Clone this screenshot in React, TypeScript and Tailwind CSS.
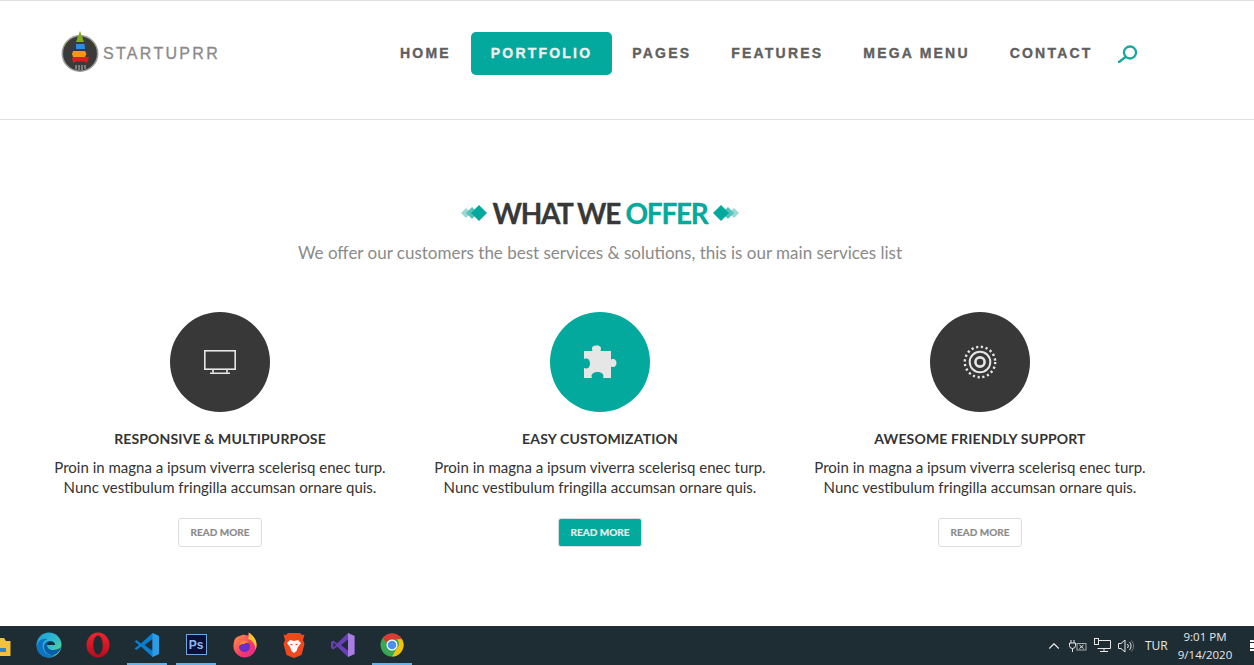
import { ChevronUp } from "lucide-react";

const services = [
    { title: "RESPONSIVE & MULTIPURPOSE", active: false, icon: <MonitorIcon /> },
    { title: "EASY CUSTOMIZATION", active: true, icon: <PuzzleIcon /> },
    { title: "AWESOME FRIENDLY SUPPORT", active: false, icon: <TargetIcon /> },
];

function MonitorIcon() {
    return (
        <svg width="34" height="26" viewBox="0 0 34 26" fill="none" stroke="#e6e6e6" strokeWidth="1.6">
            <rect x="1.8" y="1.8" width="30.4" height="18.4" />
            <path d="M10 20.5v3M24 20.5v3M7 24.2h20" />
        </svg>
    );
}

function PuzzleIcon() {
    return (
        <svg width="34" height="34" viewBox="0 0 34 34" fill="#e6e6e6">
            <path d="M1 6h8.5C8 2 10 0.5 13.5 0.5S19 2 17.500 6H28v8.500c3.500-1.500 5.500 0.500 5.500 3.500s-2 5-5.500 3.500V33h-8c1.500-3.500-1-6-5.500-6s-7 2.500-5.500 6H1V23c3.500 1.500 6-0.500 6-4.500S4.500 12.500 1 14z" />
        </svg>
    );
}

function TargetIcon() {
    return (
        <svg width="34" height="34" viewBox="0 0 34 34" fill="none" stroke="#e6e6e6">
            <circle cx="17" cy="17" r="15.200" strokeWidth="2.400" strokeDasharray="2.200 2.600" />
            <circle cx="17" cy="17" r="10.300" strokeWidth="2" />
            <circle cx="17" cy="17" r="4.600" strokeWidth="2.600" />
        </svg>
    );
}

function SearchIcon() {
    return (
        <svg width="20" height="18" viewBox="0 0 20 18" fill="none" stroke="#14a99c" strokeWidth="2.300" className="mt-[13px] ml-[5px]">
            <circle cx="12" cy="7.500" r="6" />
            <path d="M7.500 12L1 17" strokeLinecap="round" />
        </svg>
    );
}

function LogoMark() {
    return (
        <svg width="38" height="42" viewBox="0 0 38 42" className="shrink-0">
            <circle cx="19" cy="22.500" r="17.700" fill="#3a3a3a" stroke="#9b9b9b" strokeWidth="1.500" />
            <path d="M19 0l4 11h-8z" fill="#7fae1f" />
            <path d="M15 13h8.500l.5 5h-9z" fill="#2a8fdc" />
            <path d="M12 20h12l1.500 3-1.500 3H12l-1-3z" fill="#f09a12" />
            <path d="M11 26h17l-2 6-3-1.500h-8L12 32z" fill="#d4201f" />
            <path d="M15 34v4.500M18 34v5M21 34v5M24 34v4" stroke="#bdbdbd" strokeWidth="1" />
        </svg>
    );
}

function Diamonds({ flip }: { flip?: boolean }) {
    return (
        <svg width="28" height="16" viewBox="0 0 28 16" className={flip ? "scale-x-[-1]" : ""}>
            <path d="M0 8l5-5 5 5-5 5z" fill="#99dad5" />
            <path d="M5 8l6-6 6 6-6 6z" fill="#55c3bb" />
            <path d="M10 8l8-8 8 8-8 8z" fill="#02a99c" />
        </svg>
    );
}

function EdgeIcon() {
    return (
        <svg width="26" height="26" viewBox="0 0 26 26">
            <defs>
                <linearGradient id="edgeTop" x1="0" y1="0" x2="1" y2="1">
                    <stop offset="0" stopColor="#1b9de2" />
                    <stop offset="0.6" stopColor="#35c1c6" />
                    <stop offset="1" stopColor="#7fdc5a" />
                </linearGradient>
            </defs>
            <circle cx="13" cy="13" r="12.500" fill="url(#edgeTop)" />
            <path d="M1 15C1 8 7 6 12 7c-4 1-6 4-5 9 1 5 6 8 12 7-2 1.500-4 2.500-6 2.500C6 25.500 1 21 1 15z" fill="#0c74c4" />
            <path d="M8 15c0-4 3-6 6-6 3 0 5 2 5 4H11c0 3 3 5 6 5 3 0 6-1 8-3-1 5-6 9-10 8-4-1-7-4-7-8z" fill="#0a5da8" />
            <path d="M11 13c0-2 2-3.500 4-3.500S19 11 19 13z" fill="#1d2d33" />
        </svg>
    );
}

function OperaIcon() {
    return (
        <svg width="24" height="26" viewBox="0 0 24 26">
            <defs>
                <linearGradient id="operaRed" x1="0" y1="0" x2="0" y2="1">
                    <stop offset="0" stopColor="#f0242f" />
                    <stop offset="1" stopColor="#b80c1a" />
                </linearGradient>
            </defs>
            <ellipse cx="12" cy="13" rx="11.500" ry="12.500" fill="url(#operaRed)" />
            <ellipse cx="12" cy="13" rx="4.800" ry="9.500" fill="#1d2d33" />
        </svg>
    );
}

function VsCodeIcon() {
    return (
        <svg width="26" height="26" viewBox="0 0 26 26">
            <path d="M18.500 1L25 4v18l-6.500 3L7 14.500 2.500 18 0.500 16.500 5 13 0.500 9.500 2.500 8 7 11.500z" fill="#0a7fd0" />
            <path d="M18.500 7v12L10.500 13z" fill="#1d2d33" />
            <path d="M18.500 1L25 4v18l-6.500 3z" fill="#2a9ce8" />
        </svg>
    );
}

function PsIcon() {
    return (
        <div className="flex h-[21px] w-[21px] items-center justify-center border border-[#6fa8dc] bg-[#0a0f3c] font-['Liberation_Sans',sans-serif] text-[12px] leading-none font-bold text-[#8fb8f0]">
            Ps
        </div>
    );
}

function FirefoxIcon() {
    return (
        <svg width="24" height="26" viewBox="0 0 24 26">
            <defs>
                <linearGradient id="ffBody" x1="0" y1="0" x2="1" y2="1">
                    <stop offset="0" stopColor="#ffa03c" />
                    <stop offset="0.6" stopColor="#f5376e" />
                    <stop offset="1" stopColor="#e0268a" />
                </linearGradient>
            </defs>
            <path d="M1.500 8C3 5 5 4 7 4c2-1.500 5-1.500 7-.5C15.500 3 16 2 15.500 0.500c4 2 8.500 7 8 13.500-.5 6.500-5.500 11.500-11.500 11.500S0.500 20.500.5 14.500c0-2.500.3-4.500 1-6.500z" fill="url(#ffBody)" />
            <path d="M15.500.5c4 2 8.500 7 8 13.500-.2 1.500-.5 2.500-1 3.500 0-5-3-9.500-7.500-10.500 1-2 1.500-4.500.5-6.500z" fill="#ffc52e" />
            <circle cx="11.500" cy="14.500" r="5.500" fill="#6b2fc4" />
            <path d="M6 14c0-3 2.500-5.500 5.500-5.500 2 0 3.500 1 4.500 2.500-2.500-.8-4 0-4.500 1-2-.3-4 .3-5.500 2z" fill="#ff8a2a" />
        </svg>
    );
}

function BraveIcon() {
    return (
        <svg width="22" height="26" viewBox="0 0 22 26">
            <path d="M5 1h12l2 2 2.500-.5L20 8l1.500 4-3 11L11 26 3.500 23 .5 12 2 8 .5 2.500 3 3z" fill="#f1471d" />
            <path d="M7 8l4 1 4-1 3 3-3 4-1.500 4L11 21l-2.500-2L7 15l-3-4z" fill="#ffffff" />
            <path d="M7.500 12l2 1M14.500 12l-2 1" stroke="#f1471d" strokeWidth="1.200" />
        </svg>
    );
}

function VsIcon() {
    return (
        <svg width="24" height="26" viewBox="0 0 24 26">
            <path d="M17 1l6.500 3v18L17 25 6 14.500 2.500 17.500 0 16V10l2.500-1.500L6 11.500z" fill="#6a3fb5" />
            <path d="M17 7.500v11L10 13z" fill="#1d2d33" />
            <path d="M2.500 10.500L5 13l-2.500 2.500z" fill="#1d2d33" />
            <path d="M17 1l6.500 3v18L17 25z" fill="#a67fe0" />
        </svg>
    );
}

function ChromeIcon() {
    return (
        <svg width="24" height="24" viewBox="0 0 24 24">
            <circle cx="12" cy="12" r="11.500" fill="#3aa757" />
            <path d="M12 .5a11.500 11.500 0 0 1 10 5.750H12a5.750 5.750 0 0 0-5.300 3.500L2.600 5.300A11.500 11.500 0 0 1 12 .5z" fill="#d93c30" />
            <path d="M22 6.250A11.500 11.500 0 0 1 12 23.500l5-8.500a5.750 5.750 0 0 0 0-8.750z" fill="#f4c20d" />
            <circle cx="12" cy="12" r="5.500" fill="#ffffff" />
            <circle cx="12" cy="12" r="4.300" fill="#4a8ef0" />
        </svg>
    );
}

const taskbarApps = [
    { key: "edge", icon: <EdgeIcon />, open: false },
    { key: "opera", icon: <OperaIcon />, open: false },
    { key: "vscode", icon: <VsCodeIcon />, open: true },
    { key: "ps", icon: <PsIcon />, open: true },
    { key: "firefox", icon: <FirefoxIcon />, open: false },
    { key: "brave", icon: <BraveIcon />, open: false },
    { key: "vs", icon: <VsIcon />, open: false },
    { key: "chrome", icon: <ChromeIcon />, open: true },
];

const navItems = ["HOME", "PORTFOLIO", "PAGES", "FEATURES", "MEGA MENU", "CONTACT"];

export default function App() {
    return (
        <div className="flex h-[665px] w-[1254px] flex-col overflow-hidden bg-white font-['Lato',sans-serif]">
            {/* Header */}
            <header className="flex h-[120px] shrink-0 items-start border-y border-[#dedede] pt-[31px] pl-[61px]">
                <div className="-mt-px flex items-start">
                    <LogoMark />
                    <span className="mt-[16px] ml-[4px] font-['Liberation_Sans',sans-serif] text-[16px] leading-[14px] tracking-[2.300px] text-[#8a8a8a] [-webkit-text-stroke:0.3px_currentColor]">
                        STARTUPRR
                    </span>
                </div>
                <nav className="ml-[160px] flex items-center font-['Liberation_Sans',sans-serif] text-[14px] font-bold tracking-[2.200px] text-[#5f5f5f] [-webkit-text-stroke:0.35px_currentColor]">
                    {navItems.map((item) => (
                        <a
                            key={item}
                            className={
                                item === "PORTFOLIO"
                                    ? "flex h-[43px] items-center rounded-[5px] bg-[#02a99c] px-5 text-[#eeeeee]"
                                    : "flex h-[43px] items-center px-5"
                            }
                        >
                            {item}
                        </a>
                    ))}
                </nav>
                <SearchIcon />
            </header>

            {/* Services */}
            <main className="flex-1 pt-[76px]">
                <div className="ml-[30px] w-[1140px]">
                    <div className="flex items-center justify-center gap-[4px]">
                        <Diamonds />
                        <h2 className="text-[28px] leading-[34px] font-bold tracking-[-1.300px] text-[#383838] [-webkit-text-stroke:0.3px_currentColor]">
                            WHAT WE <span className="text-[#02a99c]">OFFER</span>
                        </h2>
                        <Diamonds flip />
                    </div>
                    <p className="mt-[10px] text-center text-[17px] leading-[26px] text-[#8a8a8a]">
                        We offer our customers the best services &amp; solutions, this is our main services list
                    </p>
                    <div className="mt-[46px] grid grid-cols-3">
                        {services.map((service) => (
                            <div key={service.title} className="flex flex-col items-center">
                                <div
                                    className={`flex h-[100px] w-[100px] items-center justify-center rounded-full ${
                                        service.active ? "bg-[#02a99c]" : "bg-[#383838]"
                                    }`}
                                >
                                    {service.icon}
                                </div>
                                <h3 className="mt-[15px] text-[14px] leading-[24px] font-bold tracking-[0.150px] text-[#333333]">{service.title}</h3>
                                <p className="mt-[6px] text-center text-[15px] leading-[20px] text-[#333333]">
                                    Proin in magna a ipsum viverra scelerisq enec turp.
                                    <br />
                                    Nunc vestibulum fringilla accumsan ornare quis.
                                </p>
                                <a
                                    className={`mt-[21px] flex h-[29px] w-[84px] items-center justify-center rounded-[3px] border border-[#dddddd] text-[10px] font-bold [-webkit-text-stroke:0.2px_currentColor] ${
                                        service.active ? "bg-[#02a99c] text-[#eeeeee]" : "bg-white text-[#8a8a8a]"
                                    }`}
                                >
                                    READ MORE
                                </a>
                            </div>
                        ))}
                    </div>
                </div>
            </main>

            {/* Windows taskbar */}
            <footer className="flex h-[39px] shrink-0 items-center bg-[#1d2d33] font-['Open_Sans',sans-serif] text-white">
                <svg width="11" height="20" viewBox="0 0 11 20" className="shrink-0">
                    <path d="M0 2h4l2 3h4.500v15H0z" fill="#f2c23e" />
                    <path d="M0 12h6v4H0z" fill="#2f86c9" />
                </svg>
                <div className="ml-[13.500px] flex">
                    {taskbarApps.map((app) => (
                        <div key={app.key} className="flex h-[39px] w-[49px] justify-center">
                            <div
                                className={`flex h-[39px] w-[40px] items-center justify-center border-b-2 ${
                                    app.open ? "border-[#63b3ee]" : "border-transparent"
                                }`}
                            >
                                {app.icon}
                            </div>
                        </div>
                    ))}
                </div>
                <div className="ml-auto flex items-center">
                    <ChevronUp size={18} strokeWidth={1.500} className="text-[#e8e8e8]" />
                    <svg width="18" height="14" viewBox="0 0 18 14" fill="none" stroke="#e8e8e8" strokeWidth="1" className="ml-[6px]">
                        <path d="M2 1v3M5 1v3M0.500 4h6v2.500a3 3 0 0 1-6 0zM3.500 9.500V13" />
                        <rect x="8" y="4.500" width="9" height="6.500" stroke="#aaaaaa" />
                        <path d="M10.500 6l4 3.500M14.500 6l-4 3.500" />
                    </svg>
                    <svg width="17" height="15" viewBox="0 0 17 15" fill="none" stroke="#e8e8e8" strokeWidth="1" className="ml-[7px]">
                        <path d="M3.500 2.500h13v8h-13M10 10.500v3M6 13.500h8" />
                        <rect x="0.500" y="0.500" width="4" height="6" fill="#1d2d33" />
                    </svg>
                    <svg width="16" height="14" viewBox="0 0 16 14" fill="none" stroke="#e8e8e8" strokeWidth="1" className="ml-[7px]">
                        <path d="M0.500 4.500h2.500L7 1v12L3 9.500H0.500z" />
                        <path d="M9.500 5a3 3 0 0 1 0 4M11.500 3a6 6 0 0 1 0 8" />
                        <path d="M13.500 1.500a9 9 0 0 1 0 11" stroke="#777777" />
                    </svg>
                    <span className="ml-[11px] w-[22px] text-[12px] leading-none text-[#e8e8e8]">TUR</span>
                    <div className="ml-[10px] flex w-[56px] flex-col items-center text-[11.500px] leading-[18px] text-[#e8e8e8]">
                        <span>9:01 PM</span>
                        <span>9/14/2020</span>
                    </div>
                    <div className="ml-[17px] flex h-[11px] w-[4px] flex-col justify-between bg-white py-[2px]">
                        <span className="h-px bg-[#1d2d33]" />
                        <span className="h-px bg-[#1d2d33]" />
                    </div>
                </div>
            </footer>
        </div>
    );
}
